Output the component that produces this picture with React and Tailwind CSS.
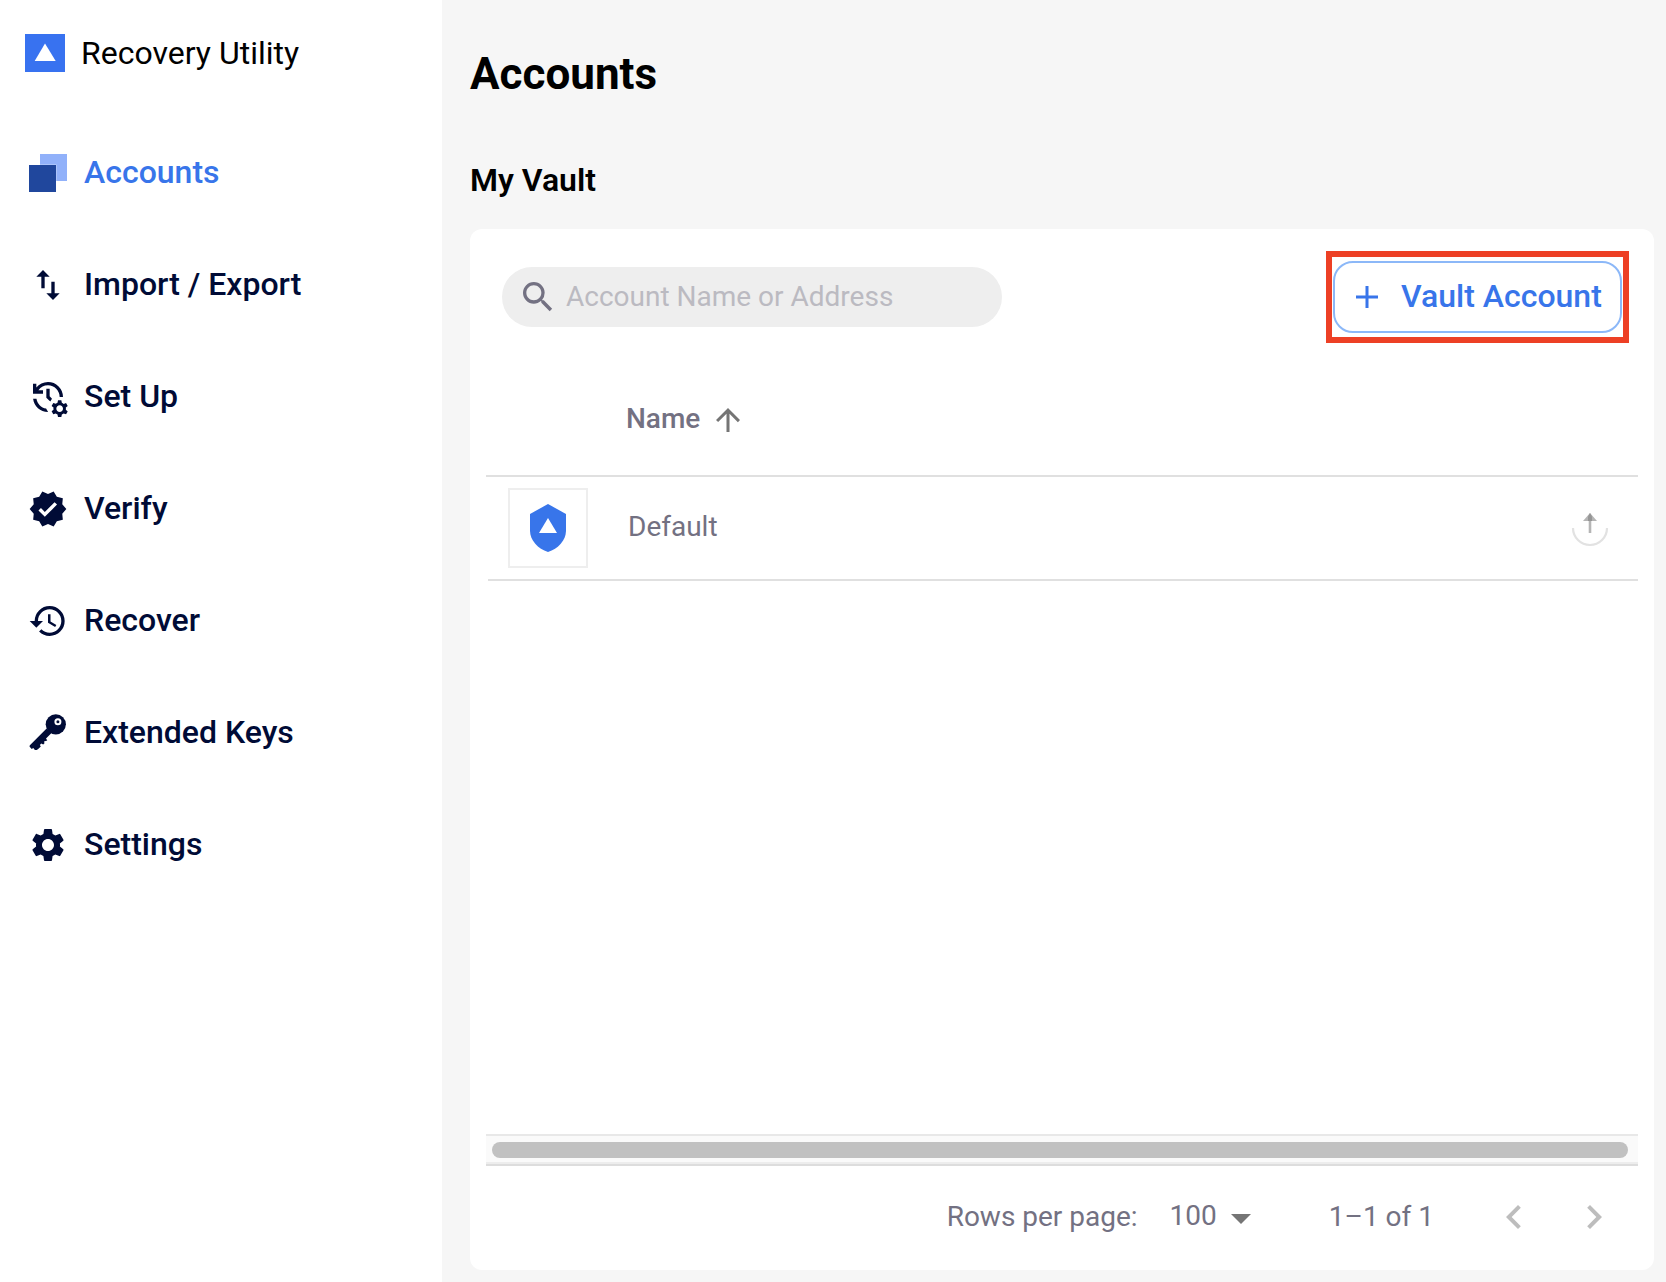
import {
  MdImportExport,
  MdManageHistory,
  MdVerified,
  MdHistory,
  MdSettings,
  MdSearch,
  MdArrowUpward,
  MdChevronLeft,
  MdChevronRight,
} from "react-icons/md";

function AccountsIcon() {
  return (
    <svg viewBox="0 0 40 40" className="size-10">
      <rect x="12" y="1" width="27" height="27" fill="#91b1fa" />
      <rect x="0.5" y="11.5" width="28" height="28" fill="#fff" opacity="0.5" />
      <rect x="1" y="12" width="27" height="27" fill="#20479d" />
    </svg>
  );
}

function KeyIcon() {
  return (
    <svg viewBox="0 0 40 40" className="size-10" fill="currentColor">
      <circle cx="27.8" cy="11.3" r="10.1" />
      <path d="M18.6 15.5 1.9 32.2q-.9 1 0 1.9l1.8 1.9 1.6-.9 1.6 1.9 1.8.1 1.5-1 2.6-2.5-.9-1.6 1.3-1.4 2 .8 1.3-1.2-.5-1.7 3.3-.9-1.3-2.1 6-6z" />
      <circle cx="29.9" cy="8.8" r="2.5" fill="none" stroke="#fff" strokeWidth="2" />
    </svg>
  );
}

const navItems = [
  { label: "Accounts", Icon: AccountsIcon, active: true },
  { label: "Import / Export", Icon: MdImportExport },
  { label: "Set Up", Icon: MdManageHistory },
  { label: "Verify", Icon: MdVerified },
  { label: "Recover", Icon: MdHistory },
  { label: "Extended Keys", Icon: KeyIcon },
  { label: "Settings", Icon: MdSettings },
];

function Sidebar() {
  return (
    <aside className="flex w-[442px] shrink-0 flex-col bg-white">
      <div className="flex h-[106px] items-center pl-[25px]">
        <svg viewBox="0 0 40 38" className="h-[38px] w-10">
          <rect width="40" height="38" fill="#3872f0" />
          <path d="M20 9.5 30.7 27H9.7z" fill="#fff" />
        </svg>
        <span className="ml-4 text-[32px] leading-none text-black">Recovery Utility</span>
      </div>
      <nav className="mt-[11px] flex flex-col">
        {navItems.map(({ label, Icon, active }) => (
          <a
            key={label}
            className={
              active
                ? "flex h-28 items-center pl-7 text-[#3875ea]"
                : "flex h-28 items-center pl-7 text-[#000b36]"
            }
          >
            <Icon className="size-10" />
            <span className="mb-0.5 ml-4 text-[32px] leading-none font-medium">{label}</span>
          </a>
        ))}
      </nav>
    </aside>
  );
}

function Toolbar() {
  return (
    <div className="flex items-start justify-between pt-[22px] pr-[25px] pl-8">
      <div className="mt-4 flex h-[60px] w-[500px] items-center rounded-full bg-[#eeeeee] pl-4">
        <MdSearch className="size-10 text-[#737182]" />
        <span className="ml-2 text-[28px] leading-none text-[#bbbac1]">
          Account Name or Address
        </span>
      </div>
      <div className="h-[92px] w-[303px] border-6 border-[#ed4025] px-px py-1">
        <button className="flex h-[72px] w-[289px] items-center rounded-[20px] border-2 border-[#8cb8f8] pl-[21px] text-[#3875ea]">
          <svg viewBox="0 0 22 22" className="size-[22px]">
            <path d="M11 0v22M0 11h22" stroke="currentColor" strokeWidth="3" />
          </svg>
          <span className="mb-0.5 ml-[23px] text-[32px] leading-none font-medium whitespace-nowrap">
            Vault Account
          </span>
        </button>
      </div>
    </div>
  );
}

function AccountsTable() {
  return (
    <div className="mx-4 flex flex-1 flex-col text-[28px] leading-none text-[#737182]">
      <div className="flex h-[134px] items-center border-b-2 border-[#e0e0e0] pt-[22px] pl-[140px]">
        <span className="mb-[3px] font-medium">Name</span>
        <MdArrowUpward className="ml-[10px] size-9 text-[#757575]" />
      </div>
      <div className="ml-0.5 flex h-[104px] items-center border-b-2 border-[#e0e0e0] pl-5">
        <div className="flex size-20 items-center justify-center border-2 border-[#eeeeee]">
          <svg viewBox="0 0 36 48" className="h-12 w-9">
            <path d="M18 0 36 10v17c0 9-8 18-18 21C8 45 0 36 0 27V10z" fill="#3875ea" />
            <path d="M18 14 27 29H9z" fill="#fff" />
          </svg>
        </div>
        <span className="mb-0.5 ml-10">Default</span>
        <svg viewBox="0 0 40 40" className="mr-7 ml-auto size-10">
          <path d="M3 20a17 17 0 0 0 34 0" fill="none" stroke="#e2e2e2" strokeWidth="2.2" />
          <path d="M20 12v13" stroke="#b5b5b5" strokeWidth="2.6" />
          <path d="M20 5 27 13H13z" fill="#b5b5b5" />
          <path d="M20 5 22 8.5V13h-4V8.5z" fill="#969696" />
        </svg>
      </div>
    </div>
  );
}

function ScrollBar() {
  return (
    <div className="mx-4 h-8 border-b-2 border-[#dddddd]">
      <div className="h-[30px] border-t-2 border-b-2 border-t-[#e8e8e8] border-b-[#ededed] bg-[#fafafa] pt-1.5 pr-[10px] pl-1.5">
        <div className="h-4 rounded-full bg-[#c1c1c1]" />
      </div>
    </div>
  );
}

function Pagination() {
  return (
    <div className="flex h-[104px] items-center justify-end pr-9 pb-0.5 text-[28px] leading-none text-[#737182]">
      <span>Rows per page:</span>
      <span className="mb-0.5 ml-8">100</span>
      <svg viewBox="0 0 20 10" className="mt-1 ml-[14px] h-[10px] w-5">
        <path d="M0 0h20L10 10z" fill="#757575" />
      </svg>
      <span className="ml-[78px]">1–1 of 1</span>
      <MdChevronLeft className="ml-14 size-12 text-[#bdbdbd]" />
      <MdChevronRight className="ml-8 size-12 text-[#bdbdbd]" />
    </div>
  );
}

export default function App() {
  return (
    <div className="flex h-[1282px] w-[1666px] overflow-hidden bg-[#f6f6f6] font-['Roboto',sans-serif]">
      <Sidebar />
      <main className="flex flex-1 flex-col pr-3 pb-3 pl-7">
        <h1 className="mt-[52px] text-[44px] leading-[44px] font-bold text-black">Accounts</h1>
        <h2 className="mt-[68px] text-[32px] leading-8 font-semibold text-black">My Vault</h2>
        <section className="mt-[33px] flex flex-1 flex-col rounded-xl bg-white">
          <Toolbar />
          <AccountsTable />
          <ScrollBar />
          <Pagination />
        </section>
      </main>
    </div>
  );
}
